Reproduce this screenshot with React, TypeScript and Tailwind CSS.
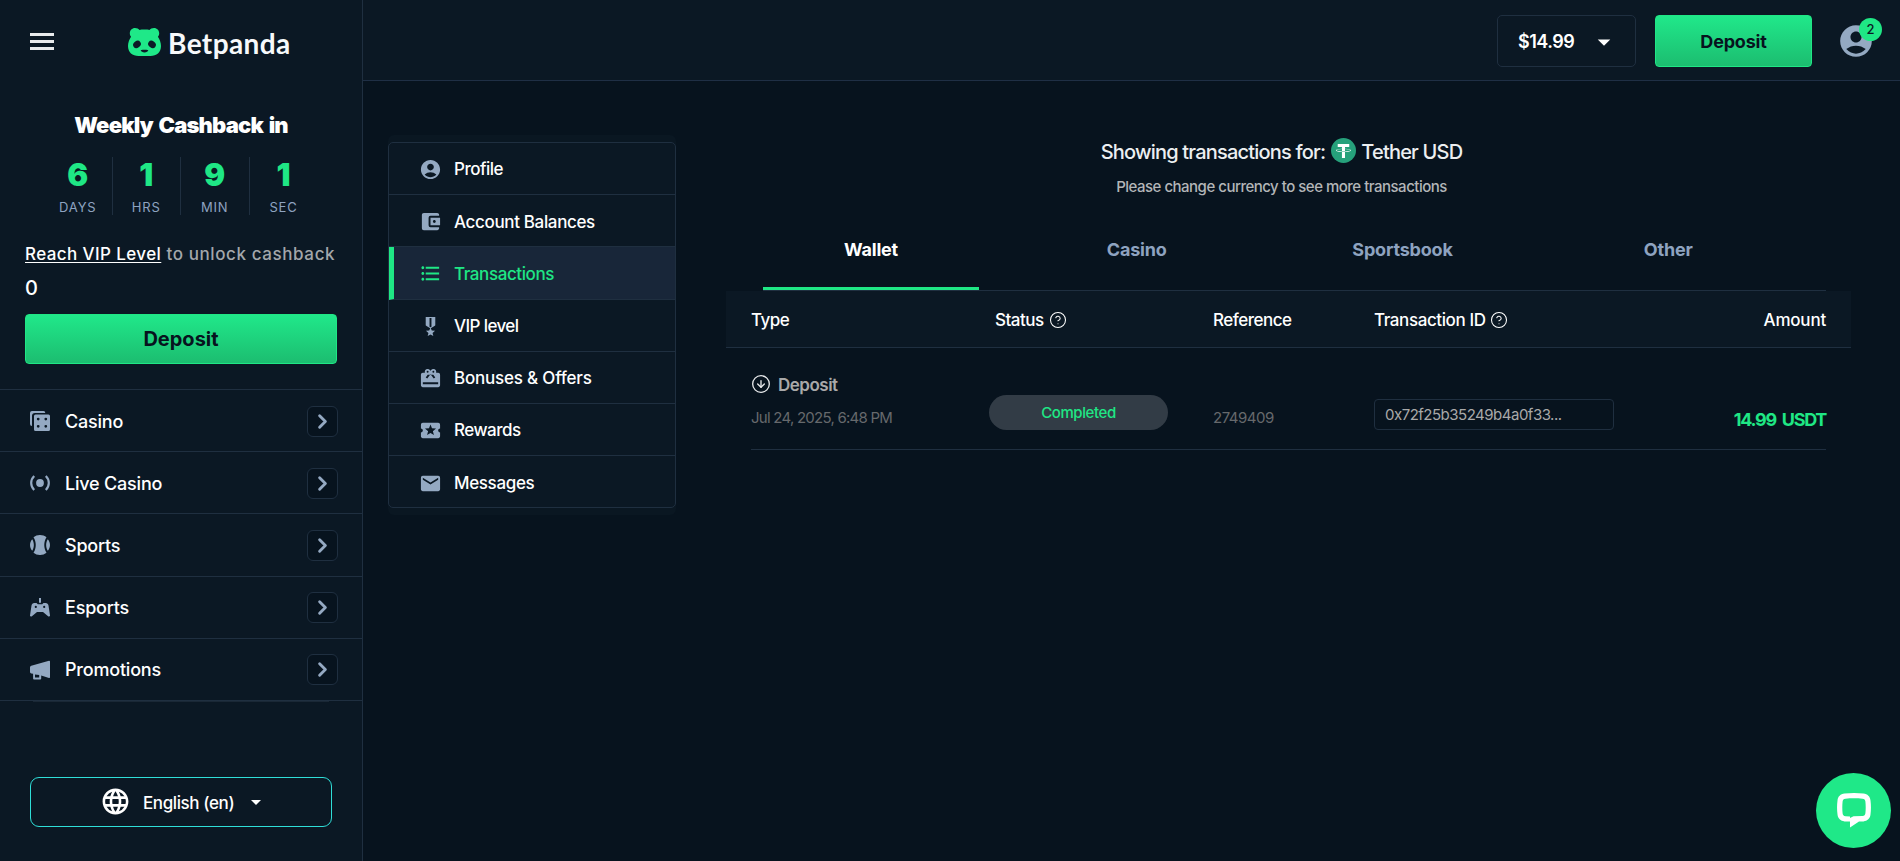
import {
    MdAccountBalanceWallet,
    MdAccountCircle,
    MdArrowDropDown,
    MdEmail,
    MdFormatListBulleted,
    MdLanguage,
    MdLocalActivity,
    MdMilitaryTech,
} from 'react-icons/md';
import { ChevronRight, CircleArrowDown, CircleHelp } from 'lucide-react';

const countdown = [
    { value: '6', label: 'DAYS' },
    { value: '1', label: 'HRS' },
    { value: '9', label: 'MIN' },
    { value: '1', label: 'SEC' },
];

const navItems = [
    { name: 'Casino', icon: DiceIcon },
    { name: 'Live Casino', icon: LiveIcon },
    { name: 'Sports', icon: BallIcon },
    { name: 'Esports', icon: GamepadIcon },
    { name: 'Promotions', icon: MegaphoneIcon },
];

const menuItems = [
    { name: 'Profile', icon: MdAccountCircle, text: 'tracking-[-0.5px]' },
    { name: 'Account Balances', icon: MdAccountBalanceWallet, text: 'tracking-[-0.35px]' },
    { name: 'Transactions', icon: MdFormatListBulleted, text: 'tracking-[-0.4px]', active: true },
    { name: 'VIP level', icon: MdMilitaryTech, text: 'tracking-[-0.6px]' },
    { name: 'Bonuses & Offers', icon: GiftIcon, text: 'tracking-[-0.2px]' },
    { name: 'Rewards', icon: MdLocalActivity, text: 'tracking-[-0.5px]' },
    { name: 'Messages', icon: MdEmail, text: 'tracking-[-0.35px]' },
];

const tabs = ['Wallet', 'Casino', 'Sportsbook', 'Other'];

function PandaLogo() {
    return (
        <svg width="33" height="28" viewBox="0 0 33 28" fill="none">
            <path
                fill="#1fe888"
                d="M7 0c2 0 3.600 .7 4.600 2 1.600-.6 8.200-.6 9.800 0C22.400 .7 24 0 26 0c3 0 5.200 2.300 5.200 5.200 0 1.400-.5 2.600-1.300 3.600C31.600 11.200 33 14.600 33 18c0 6.500-4.500 10-10.500 10h-12C4.500 28 0 24.500 0 18c0-3.400 1.400-6.800 3.100-9.200C2.300 7.800 1.800 6.600 1.800 5.200 1.800 2.300 4 0 7 0z"
            />
            <ellipse cx="9" cy="16.400" rx="4.100" ry="3.300" transform="rotate(-38 9 16.400)" fill="#0c1926" />
            <ellipse cx="24" cy="16.400" rx="4.100" ry="3.300" transform="rotate(38 24 16.400)" fill="#0c1926" />
            <path d="M12.700 22.200c2.400-.5 5.200-.5 7.600 0-.5 1.400-1.800 2.200-3.800 2.200s-3.300-.8-3.800-2.200z" fill="#0c1926" />
        </svg>
    );
}

function DiceIcon() {
    return (
        <svg width="20" height="20" viewBox="0 0 20 20" fill="currentColor">
            <path d="M2 0h11.500A2 2 0 0 1 15.300 2H5a3 3 0 0 0-3 3v10A2 2 0 0 1 0 13V2a2 2 0 0 1 2-2z" />
            <path
                fillRule="evenodd"
                d="M5.500 3.500h13A1.500 1.500 0 0 1 20 5v13.500a1.500 1.500 0 0 1-1.500 1.500h-13A1.500 1.500 0 0 1 4 18.500V5a1.500 1.500 0 0 1 1.500-1.500zM8.200 6.700a1.400 1.400 0 1 0 0 2.800 1.400 1.400 0 0 0 0-2.800zm7.600 0a1.400 1.400 0 1 0 0 2.800 1.400 1.400 0 0 0 0-2.800zM8.200 13.900a1.400 1.400 0 1 0 0 2.800 1.400 1.400 0 0 0 0-2.800zm7.600 0a1.400 1.400 0 1 0 0 2.800 1.400 1.400 0 0 0 0-2.800z"
            />
        </svg>
    );
}

function LiveIcon() {
    return (
        <svg width="20" height="20" viewBox="0 0 20 20" fill="none" stroke="currentColor" strokeWidth="2.200">
            <circle cx="10" cy="10" r="3.900" fill="currentColor" stroke="none" />
            <path d="M4.200 3C.2 7 .2 13 4.200 17M15.800 3c4 4 4 10 0 14" />
        </svg>
    );
}

function BallIcon() {
    return (
        <svg width="20" height="20" viewBox="0 0 20 20" fill="currentColor">
            <path d="M10 0c2.500 0 4.800.8 6.500 2.300-3 4.500-3 10.900 0 15.400A10 10 0 0 1 10 20a10 10 0 0 1-6.500-2.300c3-4.500 3-10.900 0-15.400A10 10 0 0 1 10 0z" />
            <path d="M2.200 4.200C4.400 7.600 4.400 12.400 2.200 15.800-.7 12.300-.7 7.700 2.200 4.200zM17.800 4.200c-2.200 3.400-2.200 8.200 0 11.600 2.900-3.500 2.900-8.100 0-11.600z" />
        </svg>
    );
}

function GamepadIcon() {
    return (
        <svg width="20" height="20" viewBox="0 0 20 20" fill="currentColor">
            <path d="M9 0h2v4.800H9z" />
            <path
                fillRule="evenodd"
                d="M4.300 5h2.200l1.300 1.300h4.400L13.500 5h2.200c1.500 0 2.500 1 2.800 2.500L20 17.500c.1.900-.8 1.400-1.600.9L13 14H7l-5.400 4.400c-.8.5-1.700 0-1.600-.9L1.500 7.500C1.800 6 2.800 5 4.300 5zM5.800 7.800a1.100 1.100 0 1 0 0 2.200 1.100 1.100 0 0 0 0-2.200zm8.400 0a1.100 1.100 0 1 0 0 2.200 1.100 1.100 0 0 0 0-2.200z"
            />
        </svg>
    );
}

function MegaphoneIcon() {
    return (
        <svg width="20" height="20" viewBox="0 0 20 20" fill="currentColor">
            <path
                fillRule="evenodd"
                d="M19 .7c.6-.1 1 .2 1 .8v15.700c0 .6-.4.900-1 .7l-7.800-2.400v3.100a.9.900 0 0 1-.9.900H4a.9.900 0 0 1-.9-.9v-4.800l-1.800-.4A1.600 1.600 0 0 1 0 11.800V7.500C0 6.700.5 6.100 1.300 5.800zM5 14.600v2.900h4.200V15z"
            />
        </svg>
    );
}

function GiftIcon({ size, className }: { size: number; className: string }) {
    return (
        <svg width={size} height={size} viewBox="0 0 24 24" fill="currentColor" className={className}>
            <path
                fillRule="evenodd"
                d="M20 6h-2.180c.11-.31.18-.65.18-1a3 3 0 0 0-5.500-1.650l-.5.670-.5-.680A3 3 0 0 0 6 5c0 .35.070.690.180 1H4c-1.110 0-2 .890-2 2v11c0 1.110.890 2 2 2h16c1.110 0 2-.890 2-2V8c0-1.110-.890-2-2-2zM9 4a1 1 0 1 1 0 2 1 1 0 0 1 0-2zm6 0a1 1 0 1 1 0 2 1 1 0 0 1 0-2zM9.080 8L7 10.830 8.620 12 11 8.760l1-1.360 1 1.360L15.380 12 17 10.830 14.920 8z"
            />
            <path d="M4 15.800h16v2.200H4z" fill="#0c1926" />
        </svg>
    );
}

function TetherIcon() {
    return (
        <svg width="25" height="25" viewBox="0 0 32 32" className="-mt-[2px] mr-[5px] ml-[6px] shrink-0">
            <circle cx="16" cy="16" r="16" fill="#26a17b" />
            <path
                fill="#fff"
                d="M17.922 17.383v-.002c-.110.008-.677.042-1.942.042-1.010 0-1.721-.030-1.971-.042v.003c-3.888-.171-6.790-.848-6.790-1.658 0-.809 2.902-1.486 6.790-1.660v2.644c.254.018.982.061 1.988.061 1.207 0 1.812-.050 1.925-.060v-2.643c3.880.173 6.775.850 6.775 1.658 0 .810-2.895 1.485-6.775 1.657m0-3.590v-2.366h5.414V7.819H8.595v3.608h5.414v2.365c-4.400.202-7.709 1.074-7.709 2.118 0 1.044 3.309 1.915 7.709 2.118v7.582h3.913v-7.584c4.393-.202 7.694-1.073 7.694-2.116 0-1.043-3.301-1.914-7.694-2.117"
            />
        </svg>
    );
}

function ChatIcon() {
    return (
        <svg width="34" height="35" viewBox="0 0 34 35" fill="none">
            <path
                fillRule="evenodd"
                fill="#fff"
                d="M7.500.6C13.500-.2 20.500-.2 26.500.6c4 .5 6.600 2.900 7 6.800.6 4.700.6 9.400 0 14.100-.4 3.900-3.100 6.400-7 6.900l-4.500.1L13 34.600V28.500l-5.500-.1c-3.900-.5-6.600-3-7-6.900-.6-4.700-.6-9.400 0-14.100.4-3.900 3-6.300 7-6.800zM8.500 5.700C6.600 5.900 5.800 6.700 5.600 8.600c-.4 3.900-.4 7.800 0 11.700.2 1.900 1 2.700 2.900 2.900l4.500.2v1.700l3.500-1.900 9-.2c1.900-.2 2.700-1 2.900-2.700.4-3.900.4-7.800 0-11.700-.2-1.900-1-2.700-2.900-2.900-5.700-.5-11.300-.5-17 0z"
            />
        </svg>
    );
}

function Sidebar() {
    return (
        <aside className="flex h-full w-[363px] shrink-0 flex-col border-r border-[#1f2f40] bg-[#0b1824]">
            <div className="flex h-[81px] shrink-0 items-center pl-[30px]">
                <div className="mt-[2px] flex w-6 flex-col gap-[4px]">
                    <span className="h-[3px] bg-[#e8eaec]" />
                    <span className="h-[3px] bg-[#e8eaec]" />
                    <span className="h-[3px] bg-[#e8eaec]" />
                </div>
                <div className="mt-[3px] ml-[74px] flex items-center">
                    <PandaLogo />
                    <span className="mt-px ml-[7px] font-[Lato] text-[28px] leading-none font-bold tracking-[0.4px] text-[#f7f9fb]">
                        Betpanda
                    </span>
                </div>
            </div>

            {/* Cashback countdown */}
            <div className="flex h-[308px] shrink-0 flex-col px-[25px]">
                <h2 className="mt-[29px] text-center text-[22px] leading-[30px] font-black tracking-[-0.8px] [word-spacing:2px] text-white">
                    Weekly Cashback in
                </h2>
                <div className="mt-[17px] ml-[19px] flex h-[58px]">
                    {countdown.map((item, i) => (
                        <div
                            key={i}
                            className={`flex flex-col items-center ${i < 3 ? 'w-[68.500px] border-r border-[#1f2f40]' : 'w-[68px]'}`}
                        >
                            <span className="mt-px text-[31px] leading-[34px] font-black text-[#1fe785]">{item.value}</span>
                            <span className="mt-[7px] text-[13px] leading-4 tracking-[0.8px] text-[#8ea3c0]">{item.label}</span>
                        </div>
                    ))}
                </div>
                <p className="mt-[25px] text-[17px] leading-7 font-medium tracking-[0.6px] whitespace-nowrap text-[#a3a7ab]">
                    <a className="tracking-[0.4px] text-white underline underline-offset-2">Reach VIP Level</a> to unlock cashback
                </p>
                <p className="mt-[6px] text-[20px] leading-7 font-medium text-white">0</p>
                <button className="mt-[12px] h-[50px] rounded border border-[#1fe785] bg-linear-to-b from-[#20e88a] to-[#1cbd70] text-[20px] font-bold text-[#07131e]">
                    Deposit
                </button>
            </div>

            <nav className="border-t border-[#1f2f40]">
                {navItems.map((item) => (
                    <div key={item.name} className="flex h-[62.200px] items-center border-b border-[#1f2f40] pt-px pr-6 pl-[30px] text-[#94a9c2]">
                        <item.icon />
                        <span className="ml-[15px] flex-1 text-[18px] font-medium tracking-[-0.2px] text-white">{item.name}</span>
                        <span className="flex h-[31px] w-[31px] items-center justify-center rounded-md border border-[#1f2f40] bg-[#07131e]">
                            <ChevronRight size={23} strokeWidth={3} />
                        </span>
                    </div>
                ))}
            </nav>
            <div className="mr-[33px] ml-[33px] h-px shrink-0 bg-[#1a2836]" />

            <button className="mx-[30px] mt-[75px] flex h-[50px] shrink-0 items-center rounded-[9px] border border-[#2fded8] pl-[69px] text-white">
                <MdLanguage size={31} />
                <span className="mt-[3px] ml-[12px] text-[17px] font-medium tracking-[-0.4px]">English (en)</span>
                <MdArrowDropDown size={24} className="ml-[10px]" />
            </button>
        </aside>
    );
}

function Header() {
    return (
        <header className="flex h-[81px] shrink-0 items-center justify-end border-b border-[#1f2f45] bg-[#0b1824] pt-[2px] pr-[25px]">
            <div className="flex h-[52px] w-[139px] items-center rounded-[5px] border border-[#1f2f40] pl-[20px] text-white">
                <span className="text-[18px] font-semibold tracking-[-0.5px]">$14.99</span>
                <MdArrowDropDown size={30} className="mt-[2px] ml-[15px]" />
            </div>
            <button className="ml-[19px] h-[52px] w-[157px] rounded border border-[#1fe785] bg-linear-to-b from-[#20e88a] to-[#1cbd70] text-[18px] font-bold tracking-[-0.2px] text-[#07131e]">
                Deposit
            </button>
            <div className="relative ml-[25px] text-[#94a9c2]">
                <MdAccountCircle size={38} />
                <span className="absolute -top-[4px] left-[22px] flex h-[23px] w-[23px] items-center justify-center rounded-full bg-[#1fe785] text-[13px] font-medium text-[#0c1926]">
                    2
                </span>
            </div>
        </header>
    );
}

function AccountMenu() {
    return (
        <div className="w-[288px] shrink-0 self-start rounded-md bg-[#0a1722] py-[7px]">
            <div className="h-[366px] overflow-hidden rounded-[5px] border border-[#1f2f40] bg-[#0b1824]">
                {menuItems.map((item, i) => (
                    <div
                        key={item.name}
                        className={`flex h-[52.200px] items-center border-[#1f2f40] ${i < 6 ? 'border-b' : ''} ${
                            item.active ? 'border-l-[5px] border-l-[#1fe785] bg-[#182639] pl-[25px]' : 'pl-[30px]'
                        }`}
                    >
                        <item.icon size={23} className={`mt-[2px] ${item.active ? 'text-[#1fe785]' : 'text-[#94a9c2]'}`} />
                        <span
                            className={`mt-[3px] ml-[12px] text-[17px] font-medium ${item.text} ${item.active ? 'text-[#1fe785]' : 'text-white'}`}
                        >
                            {item.name}
                        </span>
                    </div>
                ))}
            </div>
        </div>
    );
}

function Transactions() {
    return (
        <section className="ml-[50px] w-[1125px]">
            <h1 className="mr-[14px] flex h-[33px] items-center justify-center text-[20px] font-medium tracking-[-0.8px] text-[#eceff1]">
                Showing transactions for: <TetherIcon /> Tether USD
            </h1>
            <p className="mt-[7px] mr-[14px] text-center text-[15px] leading-6 font-medium tracking-[-0.5px] text-[#b3b6b8]">
                Please change currency to see more transactions
            </p>

            <div className="mt-[28px] mr-[25px] ml-[37px] flex h-[64px] border-b border-[#1f2f40]">
                {tabs.map((tab, i) => (
                    <div
                        key={tab}
                        className={`mr-[49.750px] flex flex-1 justify-center text-[18px] font-bold tracking-[-0.2px] ${
                            i === 0 ? 'border-b-[3px] border-[#1fe785] text-white' : 'text-[#8ea3c0]'
                        }`}
                    >
                        <span className="mt-[9px]">{tab}</span>
                    </div>
                ))}
            </div>

            {/* Table header */}
            <div className="flex h-[57px] items-center border-b border-[#1f2f40] bg-[#0b1824] px-[25px] pt-[3px] text-[17px] font-medium tracking-[-0.5px] text-white">
                <span className="w-[244px]">Type</span>
                <span className="flex w-[218px] items-center gap-[5px]">
                    Status <CircleHelp size={18} strokeWidth={1.4} className="-mt-[2px]" />
                </span>
                <span className="w-[161px]">Reference</span>
                <span className="flex flex-1 items-center gap-[4px] tracking-[-0.4px]">
                    Transaction ID <CircleHelp size={18} strokeWidth={1.4} className="-mt-[2px]" />
                </span>
                <span className="tracking-[-0.2px]">Amount</span>
            </div>

            {/* Transaction row */}
            <div className="mx-[25px] flex h-[102px] border-b border-[#1f2f40] tracking-[-0.5px]">
                <div className="w-[238px] pt-[25px]">
                    <div className="flex items-center gap-[7px] text-[17px] leading-6 font-semibold text-[#a9a9a9]">
                        <CircleArrowDown size={20} strokeWidth={1.600} className="-mt-[2px] text-[#e8eaec]" />
                        Deposit
                    </div>
                    <div className="mt-[9px] text-[15px] leading-6 tracking-[-0.75px] text-[#66696c]">Jul 24, 2025, 6:48 PM</div>
                </div>
                <div className="w-[224px] pt-[47px]">
                    <span className="flex h-[35px] w-[179px] items-center justify-center rounded-full bg-[#323c46] pt-[2px] text-[15px] font-medium tracking-[-0.4px] text-[#1fe785]">
                        Completed
                    </span>
                </div>
                <div className="w-[161px] pt-[58px] text-[15px] leading-6 text-[#66696c]">2749409</div>
                <div className="flex-1 pt-[51px]">
                    <span className="flex h-[31px] w-[240px] items-center rounded border border-[#1f2f40] pt-[2px] pl-[10px] text-[15px] text-[#a9a9a9]">
                        0x72f25b35249b4a0f33...
                    </span>
                </div>
                <div className="pt-[60px] text-[18px] leading-6 font-bold tracking-[-1.3px] [word-spacing:3px] text-[#1fe785]">14.99 USDT</div>
            </div>
        </section>
    );
}

export default function App() {
    return (
        <div className="relative flex h-[861px] w-[1900px] overflow-hidden bg-[#07131e] font-[Inter,sans-serif]">
            <Sidebar />
            <div className="flex flex-1 flex-col">
                <Header />
                <main className="flex pt-[54px] pl-[25px]">
                    <AccountMenu />
                    <Transactions />
                </main>
            </div>
            <button className="absolute right-[9px] bottom-[13px] flex h-[75px] w-[75px] items-center justify-center rounded-full bg-[#1fe888]">
                <ChatIcon />
            </button>
        </div>
    );
}
